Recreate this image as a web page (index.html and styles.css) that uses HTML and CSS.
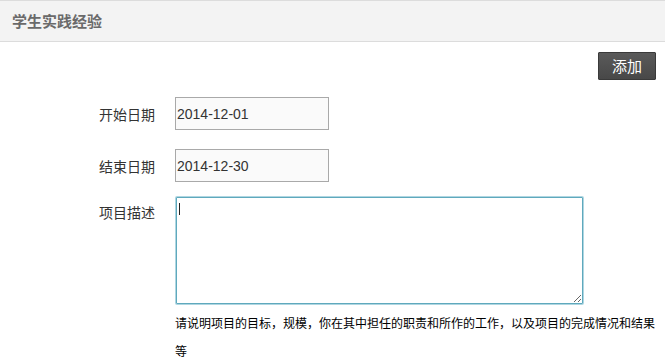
FILE: index.html
```html
<!DOCTYPE html>
<html lang="zh-CN">
<head>
<meta charset="utf-8">
<link rel="stylesheet" href="styles.css">
</head>
<body>
<div class="panel-head">学生实践经验</div>
<div class="toolbar"><button class="btn-add">添加</button></div>
<div class="form">
  <div class="row row-start">
    <label class="label">开始日期</label>
    <input class="field" type="text" value="2014-12-01">
  </div>
  <div class="row row-end">
    <label class="label">结束日期</label>
    <input class="field" type="text" value="2014-12-30">
  </div>
  <div class="row row-desc">
    <label class="label label-desc">项目描述</label>
    <div class="desc-col">
      <div class="area-wrap">
        <textarea class="area"></textarea>
        <span class="caret"></span>
      </div>
      <p class="hint">请说明项目的目标，规模，你在其中担任的职责和所作的工作，以及项目的完成情况和结果等</p>
    </div>
  </div>
</div>
</body>
</html>
```
FILE: styles.css
```css
html, body {
  margin: 0;
  padding: 0;
  background: #fff;
}
body {
  width: 665px;
  font-family: "Noto Sans CJK SC", "Liberation Sans", sans-serif;
  color: #333;
}
.panel-head {
  height: 40px;
  border-top: 1px solid #dcdcdc;
  border-bottom: 1px solid #dcdcdc;
  background: #f3f3f3;
  box-sizing: content-box;
  padding-left: 12px;
  font-size: 15px;
  font-weight: bold;
  color: #6a6a6a;
  line-height: 40px;
}
.toolbar {
  display: flex;
  justify-content: flex-end;
  padding: 10px 9px 0 0;
}
.btn-add {
  width: 58px;
  height: 28px;
  background: linear-gradient(#5a5a5a, #484848);
  border: 1px solid #3a3a3a;
  border-radius: 1px;
  color: #fff;
  font-family: "Noto Sans CJK SC", sans-serif;
  font-size: 15px;
  padding: 0;
  line-height: 26px;
}
.form {
  display: flex;
  flex-direction: column;
  padding-top: 17px;
}
.row {
  display: grid;
  grid-template-columns: 155px 1fr;
  column-gap: 20px;
  align-items: center;
}
.row-end { margin-top: 19px; }
.row-desc { margin-top: 15px; align-items: start; }
.label {
  text-align: right;
  font-size: 14px;
  color: #333;
}
.label-desc { padding-top: 5px; }
.field {
  width: 154px;
  height: 33px;
  box-sizing: border-box;
  border: 1px solid #a9a9a9;
  background: #fafafa;
  font-family: "Liberation Sans", Arial, sans-serif;
  font-size: 14px;
  color: #333;
  padding: 0 1px;
  margin: 0;
  outline: none;
}
.desc-col {
  padding-right: 8px;
  margin-left: 1px;
}
.area-wrap {
  position: relative;
  width: 407px;
  height: 107px;
}
.area {
  display: block;
  width: 407px;
  height: 107px;
  box-sizing: border-box;
  border: 1px solid #5fa9bd;
  box-shadow: 0 0 0 1px rgba(110, 180, 200, 0.55);
  border-radius: 1px;
  margin: 0;
  outline: none;
  background: #fff;
}
.caret {
  position: absolute;
  left: 3px;
  top: 6px;
  width: 1px;
  height: 12px;
  background: #222;
}
.hint {
  margin: 0;
  margin-left: -1px;
  padding-top: 5px;
  font-size: 12px;
  line-height: 28px;
  color: #000;
}
```
